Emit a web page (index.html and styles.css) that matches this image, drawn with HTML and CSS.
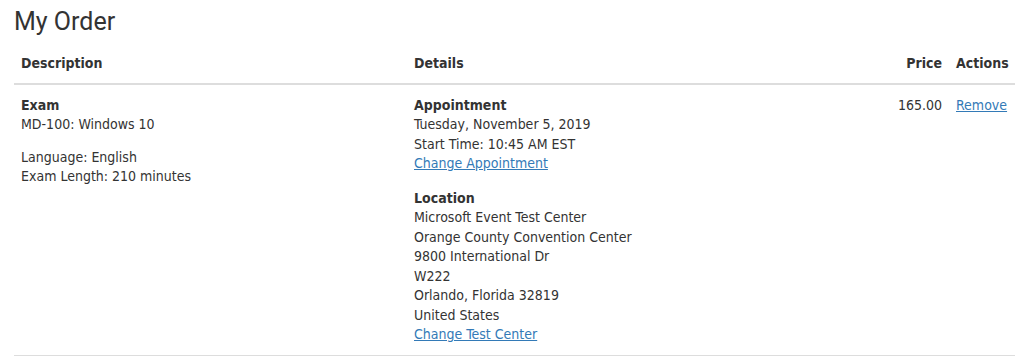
FILE: index.html
```html
<!DOCTYPE html>
<html lang="en">
<head>
    <meta charset="UTF-8">
    <meta name="viewport" content="width=device-width, initial-scale=1.0">
    <title>My Order</title>
    <link rel="stylesheet" href="styles.css">
</head>
<body>
    <div class="order">
        <h1>My Order</h1>
        <table class="order-table">
            <colgroup>
                <col class="col-desc">
                <col class="col-details">
                <col class="col-price">
                <col class="col-actions">
            </colgroup>
            <thead>
                <tr>
                    <th>Description</th>
                    <th>Details</th>
                    <th class="num">Price</th>
                    <th>Actions</th>
                </tr>
            </thead>
            <tbody>
                <tr>
                    <td>
                        <p><strong>Exam</strong><br>MD-100: Windows 10</p>
                        <p>Language: English<br>Exam Length: 210 minutes</p>
                    </td>
                    <td class="details">
                        <p>
                            <strong>Appointment</strong><br>
                            Tuesday, November 5, 2019<br>
                            Start Time: 10:45 AM EST<br>
                            <a href="#">Change Appointment</a>
                        </p>
                        <p>
                            <strong>Location</strong><br>
                            Microsoft Event Test Center<br>
                            Orange County Convention Center<br>
                            9800 International Dr<br>
                            W222<br>
                            Orlando, Florida 32819<br>
                            United States<br>
                            <a href="#">Change Test Center</a>
                        </p>
                    </td>
                    <td class="num">165.00</td>
                    <td><a href="#">Remove</a></td>
                </tr>
            </tbody>
        </table>
    </div>
</body>
</html>
```

FILE: styles.css
```css
body {
    margin: 0;
    background-color: #fff;
    color: #333;
    font-family: "DejaVu Sans Condensed", "DejaVu Sans", sans-serif;
    font-size: 14px;
    line-height: 19.5px;
}

.order {
    padding: 0 9px 0 14px;
}

h1 {
    margin: 4px 0 13px 0;
    font-family: Roboto, sans-serif;
    font-weight: 400;
    font-size: 25px;
    line-height: 36px;
}

.order-table {
    width: 100%;
    border-collapse: collapse;
    table-layout: fixed;
}

.col-desc { width: 393px; }
.col-price { width: 143px; }
.col-actions { width: 66px; }

.order-table th {
    text-align: left;
    font-weight: bold;
    padding: 1px 7px 9px 7px;
    border-bottom: 2px solid #ddd;
}

.order-table td {
    vertical-align: top;
    padding: 11px 7px 10px 7px;
    border-bottom: 1px solid #ddd;
}

.order-table .num {
    text-align: right;
}

.order-table p {
    margin: 0 0 13px 0;
}

.order-table .details p {
    margin-bottom: 15px;
}

.order-table td p:last-child {
    margin-bottom: 0;
}

a {
    color: #337ab7;
    text-decoration: underline;
}
```
